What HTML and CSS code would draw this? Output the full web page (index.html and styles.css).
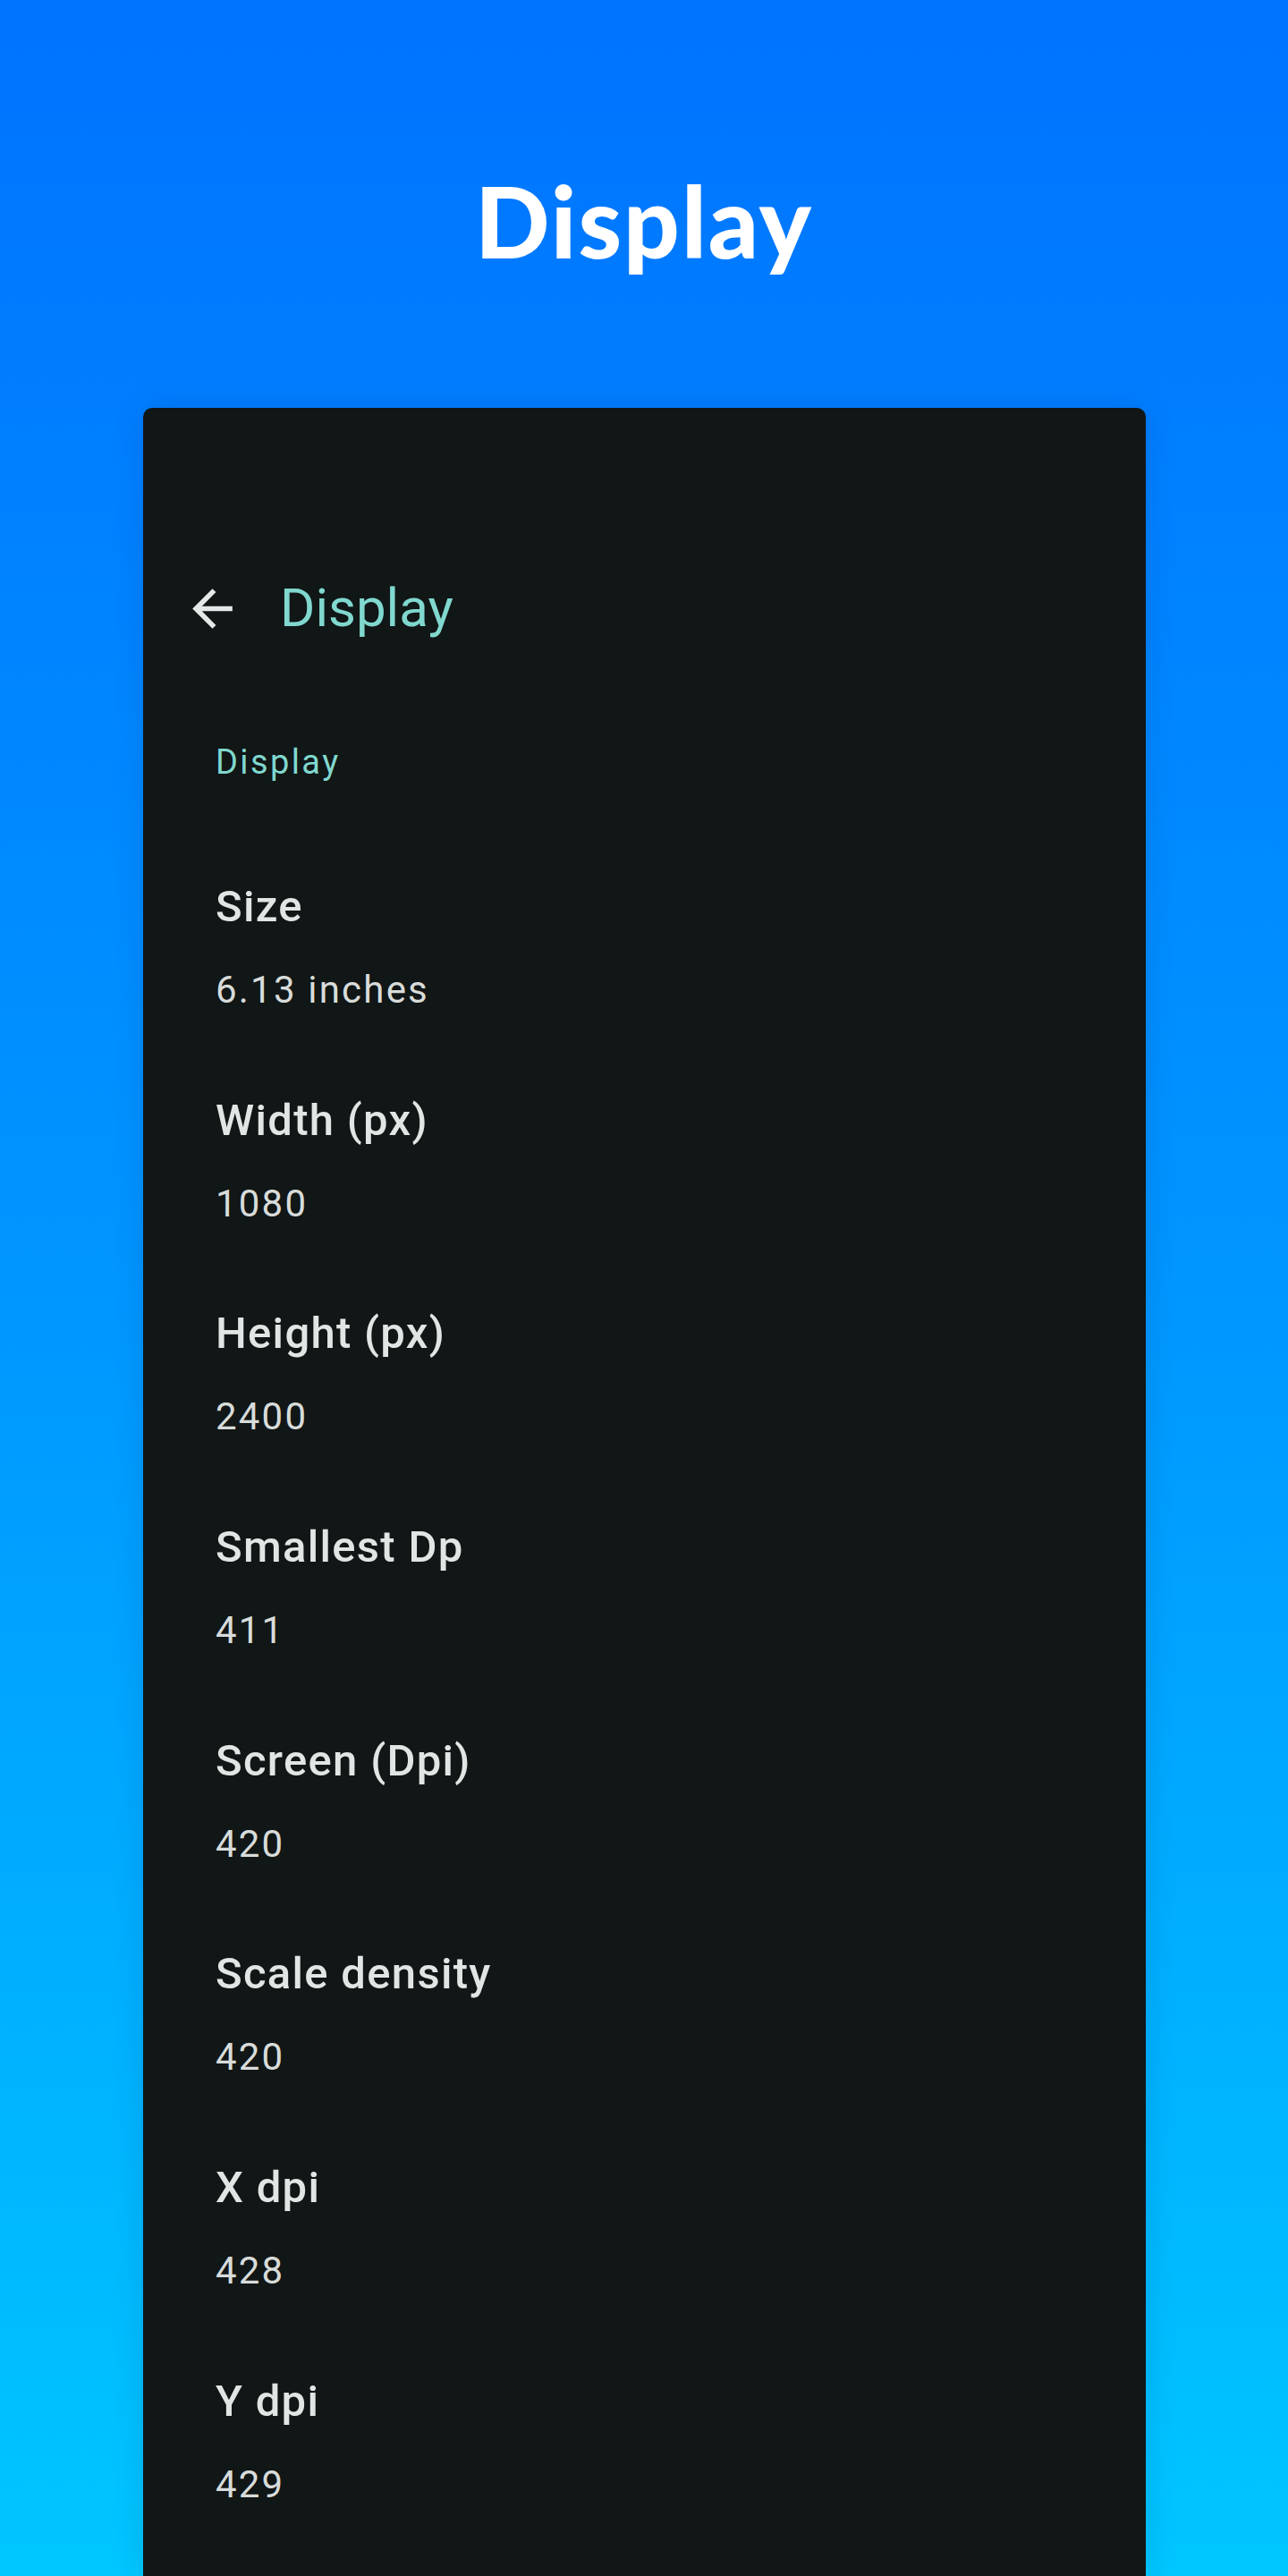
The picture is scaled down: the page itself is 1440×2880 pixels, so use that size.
FILE: index.html
```html
<!DOCTYPE html>
<html lang="en">
<head>
<meta charset="utf-8">
<title>Display</title>
<link rel="stylesheet" href="styles.css">
</head>
<body>
<div class="page">
  <header class="hero">
    <h1 class="hero-title">Display</h1>
  </header>
  <main class="card">
    <div class="toolbar">
      <svg class="back" viewBox="0 0 24 24" aria-hidden="true">
        <path d="M20 11H7.83l5.59-5.59L12 4l-8 8 8 8 1.41-1.41L7.83 13H20v-2z" fill="#e4e8e6"/>
      </svg>
      <span class="toolbar-title">Display</span>
    </div>
    <div class="section-header">Display</div>
    <ul class="list">
      <li class="item"><div class="item-title">Size</div><div class="item-sub">6.13 inches</div></li>
      <li class="item"><div class="item-title">Width (px)</div><div class="item-sub">1080</div></li>
      <li class="item"><div class="item-title">Height (px)</div><div class="item-sub">2400</div></li>
      <li class="item"><div class="item-title">Smallest Dp</div><div class="item-sub">411</div></li>
      <li class="item"><div class="item-title">Screen (Dpi)</div><div class="item-sub">420</div></li>
      <li class="item"><div class="item-title">Scale density</div><div class="item-sub">420</div></li>
      <li class="item"><div class="item-title">X dpi</div><div class="item-sub">428</div></li>
      <li class="item"><div class="item-title">Y dpi</div><div class="item-sub">429</div></li>
    </ul>
  </main>
</div>
</body>
</html>
```

FILE: styles.css
```css
* { box-sizing: border-box; }
html, body { margin: 0; padding: 0; }
body {
  width: 1440px;
  height: 2880px;
  overflow: hidden;
  font-family: Roboto, "Liberation Sans", sans-serif;
}
.page {
  width: 1440px;
  height: 2880px;
  background: linear-gradient(180deg, #0073ff 0%, #0096ff 50%, #00c6ff 100%);
  display: flex;
  flex-direction: column;
}
.hero {
  height: 456px;
  padding-top: 181px;
  display: flex;
  justify-content: center;
}
.hero-title {
  margin: 0;
  font-family: Lato, "DejaVu Sans", sans-serif;
  font-weight: 900;
  font-size: 110px;
  line-height: 130px;
  height: 130px;
  color: #ffffff;
  letter-spacing: 2px;
}
.card {
  margin: 0 159px 0 160px;
  flex: 1;
  background: #111616;
  border-radius: 10px 10px 0 0;
  box-shadow: 0 0 36px rgba(0, 20, 60, 0.12);
  overflow: hidden;
}
.toolbar {
  margin-top: 184px;
  height: 80px;
  display: flex;
  align-items: center;
  padding-left: 44px;
}
.back {
  width: 67px;
  height: 67px;
  flex: none;
}
.toolbar-title {
  margin-left: 42px;
  font-size: 60px;
  line-height: 80px;
  color: #80d8cf;
  font-weight: 400;
}
.section-header {
  margin-top: 107px;
  padding-left: 81px;
  font-size: 38px;
  line-height: 50px;
  letter-spacing: 2.4px;
  color: #80d8cf;
}
.list {
  list-style: none;
  margin: 63px 0 0 0;
  padding: 0;
}
.item {
  padding: 43.85px 0 43.85px 81px;
}
.item-title {
  font-size: 49px;
  line-height: 60px;
  font-weight: 500;
  color: #e1e5e3;
  letter-spacing: 1.3px;
}
.item-sub {
  margin-top: 35px;
  font-size: 42px;
  line-height: 56px;
  color: #d8dcda;
  letter-spacing: 2.2px;
}
```
